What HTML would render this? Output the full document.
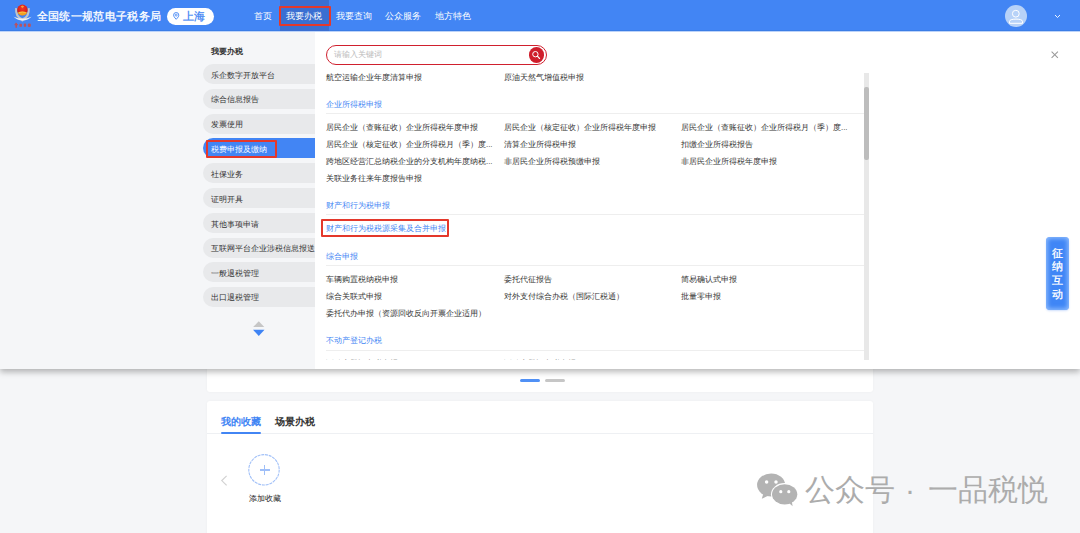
<!DOCTYPE html>
<html><head><meta charset="utf-8">
<style>
*{margin:0;padding:0;box-sizing:border-box}
html,body{width:1080px;height:533px;overflow:hidden;background:#f5f6f8;font-family:"Liberation Sans",sans-serif;color:#333}
.abs{position:absolute;white-space:nowrap}
#hdr{position:absolute;left:0;top:0;width:1080px;height:31px;background:#4285f4}
.nav{position:absolute;top:1px;height:31px;line-height:31px;font-size:9px;color:#fff}
/* page cards */
.card{position:absolute;background:#fff;border-radius:3px;box-shadow:0 0 3px rgba(0,0,0,.035)}
/* dropdown */
#dd{position:absolute;left:0;top:31px;width:1080px;height:338px;background:#fff;box-shadow:0 3px 6px rgba(0,0,0,.28)}
#left{position:absolute;left:0;top:0;width:315px;height:338px;background:#f5f6f8}
.mi{position:absolute;left:202.5px;width:112.5px;height:20px;border-radius:10px 0 0 10px;background:#e8e9eb}
.mi.sel{background:#4285f4}
.t{position:absolute;font-size:7.875px;line-height:10px;white-space:nowrap;color:#333}
.c1{left:326px}.c2{left:503.5px}.c3{left:681px}
.ell{}
.sec{color:#4285f4}
.div{position:absolute;left:326px;width:538px;height:1px;background:#eeeeee}
.redbox{position:absolute;border:2px solid #e4382b;border-radius:1px}
</style></head>
<body>
<!-- underlying page -->
<div class="card" style="left:207px;top:340px;width:666px;height:52px"></div>
<div class="abs" style="left:519.5px;top:378.5px;width:20.5px;height:3px;border-radius:2px;background:#5090f5"></div>
<div class="abs" style="left:544.5px;top:378.5px;width:20.5px;height:3px;border-radius:2px;background:#c6c6c6"></div>
<div class="card" style="left:207px;top:401px;width:666px;height:140px"></div>
<div class="abs" style="left:220.7px;top:415px;font-size:10.125px;line-height:14px;font-weight:bold;color:#4285f4">我的收藏</div>
<div class="abs" style="left:274.8px;top:415px;font-size:10.125px;line-height:14px;font-weight:bold;color:#333">场景办税</div>
<div class="abs" style="left:207px;top:433px;width:666px;height:1px;background:#eef0f3"></div>
<div class="abs" style="left:220.7px;top:432px;width:40.5px;height:2px;background:#4285f4;border-radius:1px"></div>
<svg class="abs" style="left:248px;top:454px" width="32" height="32" viewBox="0 0 32 32"><circle cx="16" cy="15.8" r="15.2" fill="none" stroke="#a2c1f8" stroke-width="1.1" stroke-dasharray="3 0.8"/></svg>
<div class="abs" style="left:259.5px;top:469px;width:10px;height:1.8px;background:#9fbff8"></div>
<div class="abs" style="left:263.6px;top:465px;width:1.8px;height:10px;background:#9fbff8"></div>
<svg class="abs" style="left:219px;top:474px" width="10" height="13" viewBox="0 0 10 13"><path d="M7.6 1.8 L2.8 6.6 L7.6 11.4" fill="none" stroke="#d2d2d2" stroke-width="1.2"/></svg>
<div class="abs" style="left:248.8px;top:494px;font-size:7.875px;line-height:10px;color:#222">添加收藏</div>

<!-- dropdown panel -->
<div id="dd">
  <div id="left">
    <div class="abs" style="left:211px;top:16.4px;font-size:7.875px;line-height:10px;font-weight:bold;color:#333">我要办税</div>
    <div class="mi" style="top:33px"></div>
    <div class="mi" style="top:58px"></div>
    <div class="mi" style="top:82.5px"></div>
    <div class="mi sel" style="top:107px"></div>
    <div class="mi" style="top:132px"></div>
    <div class="mi" style="top:157px"></div>
    <div class="mi" style="top:182px"></div>
    <div class="mi" style="top:207px"></div>
    <div class="mi" style="top:231px"></div>
    <div class="mi" style="top:256px"></div>
    <div class="t" style="left:211px;top:40px;color:#333">乐企数字开放平台</div>
    <div class="t" style="left:211px;top:64px;color:#333">综合信息报告</div>
    <div class="t" style="left:211px;top:89px;color:#333">发票使用</div>
    <div class="t" style="left:211px;top:114px;color:#fff">税费申报及缴纳</div>
    <div class="t" style="left:211px;top:139px;color:#333">社保业务</div>
    <div class="t" style="left:211px;top:164px;color:#333">证明开具</div>
    <div class="t" style="left:211px;top:189px;color:#333">其他事项申请</div>
    <div class="t" style="left:211px;top:213px;color:#333">互联网平台企业涉税信息报送</div>
    <div class="t" style="left:211px;top:238px;color:#333">一般退税管理</div>
    <div class="t" style="left:211px;top:262px;color:#333">出口退税管理</div>
    <svg class="abs" style="left:252px;top:289px" width="14" height="17" viewBox="0 0 14 17"><path d="M6.75 1.3 L12.3 7 L1.2 7 Z" fill="#c6c6c6"/><path d="M1 9.7 L12.5 9.7 L6.75 16 Z" fill="#3f84f4"/></svg>
    <div class="redbox" style="left:206.4px;top:109.2px;width:71px;height:18.2px"></div>
  </div>
  <!-- search -->
  <div class="abs" style="left:326px;top:14px;width:221px;height:20px;border:1.5px solid #d0202e;border-radius:10px;background:#fff"></div>
  <div class="abs" style="left:334px;top:19px;font-size:7.875px;line-height:10px;color:#bbb">请输入关键词</div>
  <div class="abs" style="left:529.2px;top:16.4px;width:15.2px;height:15.2px;border-radius:50%;background:#cf1d2b"></div>
  <svg class="abs" style="left:531px;top:19px" width="10" height="10" viewBox="0 0 10 10"><circle cx="4.4" cy="4.2" r="2.7" fill="none" stroke="#fff" stroke-width="1"/><path d="M6.4 6.2 L8.6 8.5" stroke="#fff" stroke-width="1.1" stroke-linecap="round"/></svg>
  <!-- close -->
  <svg class="abs" style="left:1050px;top:19px" width="10" height="10" viewBox="0 0 10 10"><path d="M1.6 1.6 L7.9 7.9 M7.9 1.6 L1.6 7.9" stroke="#9a9a9a" stroke-width="1.05"/></svg>
  <!-- content -->
  <div class="abs" style="left:0;top:0;width:1080px;height:329px;overflow:hidden">
    <div class="t c1" style="top:42px">航空运输企业年度清算申报</div>
    <div class="t c2" style="top:42px">原油天然气增值税申报</div>

    <div class="t c1 sec" style="top:69px">企业所得税申报</div>
    <div class="div" style="top:82px"></div>
    <div class="t c1 ell" style="top:92px">居民企业（查账征收）企业所得税年度申报</div>
    <div class="t c2 ell" style="top:92px">居民企业（核定征收）企业所得税年度申报</div>
    <div class="t c3 ell" style="top:92px">居民企业（查账征收）企业所得税月（季）度...</div>
    <div class="t c1 ell" style="top:109px">居民企业（核定征收）企业所得税月（季）度...</div>
    <div class="t c2 ell" style="top:109px">清算企业所得税申报</div>
    <div class="t c3 ell" style="top:109px">扣缴企业所得税报告</div>
    <div class="t c1 ell" style="top:126px">跨地区经营汇总纳税企业的分支机构年度纳税...</div>
    <div class="t c2 ell" style="top:126px">非居民企业所得税预缴申报</div>
    <div class="t c3 ell" style="top:126px">非居民企业所得税年度申报</div>
    <div class="t c1 ell" style="top:143px">关联业务往来年度报告申报</div>

    <div class="t c1 sec" style="top:170px">财产和行为税申报</div>
    <div class="div" style="top:183px"></div>
    <div class="t c1 sec" style="top:193px">财产和行为税税源采集及合并申报</div>
    <div class="redbox" style="left:321px;top:187.5px;width:127.6px;height:18px"></div>

    <div class="t c1 sec" style="top:221px">综合申报</div>
    <div class="div" style="top:234px"></div>
    <div class="t c1 ell" style="top:244px">车辆购置税纳税申报</div>
    <div class="t c2 ell" style="top:244px">委托代征报告</div>
    <div class="t c3 ell" style="top:244px">简易确认式申报</div>
    <div class="t c1" style="top:261px">综合关联式申报</div>
    <div class="t c2" style="top:261px">对外支付综合办税（国际汇税通）</div>
    <div class="t c3" style="top:261px">批量零申报</div>
    <div class="t c1" style="top:278px">委托代办申报（资源回收反向开票企业适用）</div>

    <div class="t c1 sec" style="top:305px">不动产登记办税</div>
    <div class="div" style="top:318.6px"></div>
    <div class="t c1" style="top:328px">不动产登记办税申报</div>
    <div class="t c2" style="top:328px">不动产登记办税申报</div>
  </div>
  <!-- scrollbar -->
  <div class="abs" style="left:864px;top:42px;width:4.5px;height:287px;background:#e8e8e8"></div>
  <div class="abs" style="left:864px;top:56px;width:4.5px;height:73px;background:#bdbdbd;border-radius:2px"></div>
</div>

<!-- header -->
<div id="hdr"></div>
<div class="abs" style="left:0;top:30px;width:1080px;height:1px;background:#3b7de6"></div><div class="abs" style="left:0;top:31px;width:1080px;height:1px;background:#bcd3f9"></div>
<div class="abs" style="left:280px;top:0;width:49px;height:31px;background:#3a6fd2"></div>
<div class="redbox" style="left:279.2px;top:5.9px;width:52px;height:19.7px"></div>
<!-- logo -->
<svg class="abs" style="left:12px;top:3px" width="21" height="26" viewBox="0 0 21 26">
  <defs><radialGradient id="em" cx="50%" cy="35%" r="60%"><stop offset="0" stop-color="#f03a2a"/><stop offset="0.55" stop-color="#e0261e"/><stop offset="1" stop-color="#c81e1a"/></radialGradient></defs>
  <path d="M4.2 5.2 Q3.4 14.2 10.4 16.6 Q17.4 14.2 16.6 5.2" fill="none" stroke="#c2c5ca" stroke-width="2.2"/>
  <circle cx="10.4" cy="6.9" r="5.3" fill="url(#em)"/>
  <path d="M5.6 9.4 Q10.4 7.4 15.2 9.4 Q14.4 12 10.4 12.4 Q6.4 12 5.6 9.4Z" fill="#f2a122"/><path d="M7 9.6 Q10.4 8.6 13.8 9.6" fill="none" stroke="#f8c94a" stroke-width=".8"/>
  <path d="M8.6 3.6 L10.4 2.6 L12.2 3.6 L10.4 5Z" fill="#f6c23a" opacity=".8"/>
  <path d="M1.6 13.8 Q10.4 21.5 19.6 13.8 Q10.4 17.6 1.6 13.8Z" fill="#eef0f2"/>
  <path d="M5 15.8 Q10.4 19.6 15.8 15.8 L10.4 18.6Z" fill="#c9ccd2"/>
  <g fill="#d8463a" opacity=".8"><rect x="3.4" y="19.8" width="1.6" height="5" rx=".5"/><rect x="2.4" y="21" width="3.6" height="1.2" rx=".5"/><rect x="7.4" y="20.8" width="2.6" height="3" rx=".9"/><rect x="11.8" y="20.6" width="2.4" height="3.2" rx=".9"/><rect x="15.8" y="20.6" width="3" height="3.4" rx="1.2"/></g>
</svg>
<div class="abs" style="left:36.5px;top:8px;font-size:11.25px;line-height:16px;color:#fff;-webkit-text-stroke:0.3px #fff;letter-spacing:0.35px">全国统一规范电子税务局</div>
<div class="abs" style="left:167px;top:7.8px;width:47px;height:17.2px;border-radius:9px;background:#fff"></div>
<svg class="abs" style="left:172.6px;top:12.3px" width="7" height="8" viewBox="0 0 7 8"><path d="M3.2 7.3 C1.3 5.3 0.6 4.2 0.6 3.1 A2.6 2.6 0 0 1 5.8 3.1 C5.8 4.2 5.1 5.3 3.2 7.3Z" fill="none" stroke="#4285f4" stroke-width="0.9"/><circle cx="3.2" cy="3.1" r="1" fill="none" stroke="#4285f4" stroke-width="0.8"/></svg>
<div class="abs" style="left:183px;top:8.2px;font-size:11.25px;line-height:16px;color:#4285f4;-webkit-text-stroke:0.3px #4285f4">上海</div>
<div class="nav" style="left:254px">首页</div>
<div class="nav" style="left:286px">我要办税</div>
<div class="nav" style="left:336px">我要查询</div>
<div class="nav" style="left:385px">公众服务</div>
<div class="nav" style="left:434.5px">地方特色</div>
<!-- avatar -->
<div class="abs" style="left:1004.8px;top:5px;width:22.4px;height:22.4px;border-radius:50%;background:#b7d2f8"></div>
<svg class="abs" style="left:1005px;top:5px" width="22" height="22" viewBox="0 0 22 22"><circle cx="10.8" cy="8.7" r="3.4" fill="none" stroke="#fff" stroke-width="1"/><path d="M4.5 18.3 L4.5 16.4 Q4.6 14.2 11 14.1 Q17.4 14.2 17.5 16.4 L17.5 18.3 Z" fill="none" stroke="#fff" stroke-width="1" stroke-linejoin="round"/></svg>
<svg class="abs" style="left:1054px;top:14px" width="7" height="5" viewBox="0 0 7 5"><path d="M1 1 L3.5 3.5 L6 1" fill="none" stroke="#fff" stroke-width="0.9"/></svg>

<!-- side float -->
<div class="abs" style="left:1046px;top:236.5px;width:23px;height:73.5px;border-radius:4px;background:#3f86f6;box-shadow:inset 0 0 4px 1.5px rgba(170,205,255,.75),0 1px 2px rgba(66,133,244,.25)"></div>
<div class="abs" style="left:1051.5px;top:246.5px;width:12px;font-size:11px;line-height:13.8px;color:#fff;white-space:normal;text-align:center;-webkit-text-stroke:0.3px #fff">征纳互动</div>

<!-- watermark -->
<svg class="abs" style="left:756px;top:472px" width="44" height="36" viewBox="0 0 44 36">
  <ellipse cx="15.1" cy="13" rx="14" ry="11.5" fill="#b3b3b3"/>
  <path d="M7.5 21 L5.8 26.8 L13 23.2Z" fill="#b3b3b3"/>
  <circle cx="10.6" cy="10" r="1.75" fill="#fff"/><circle cx="20" cy="10" r="1.75" fill="#fff"/>
  <ellipse cx="28.65" cy="22.3" rx="13.7" ry="11.2" fill="#fff"/>
  <ellipse cx="28.65" cy="22.3" rx="12.65" ry="10.1" fill="#b3b3b3"/>
  <path d="M32.5 30.5 L36.6 34.2 L35.8 29.2Z" fill="#b3b3b3"/>
  <circle cx="24.8" cy="19.7" r="1.6" fill="#fff"/><circle cx="32.8" cy="19.7" r="1.6" fill="#fff"/>
</svg>
<div class="abs" style="left:805px;top:472px;font-size:30px;line-height:36px;color:#acacac">公众号</div><div class="abs" style="left:905px;top:472px;font-size:30px;line-height:36px;color:#acacac">·</div><div class="abs" style="left:928px;top:472px;font-size:30px;line-height:36px;color:#acacac">一品税悦</div>
</body></html>
